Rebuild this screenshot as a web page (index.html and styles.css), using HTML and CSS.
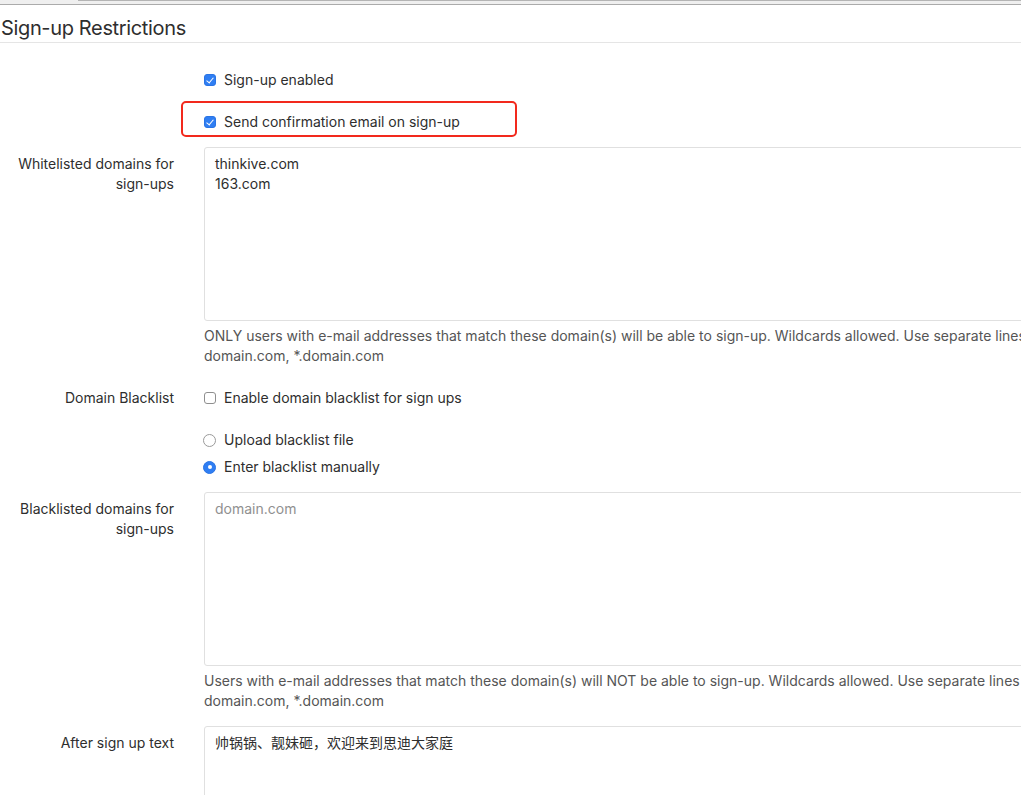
FILE: index.html
```html
<!DOCTYPE html>
<html>
<head>
<meta charset="utf-8">
<link rel="stylesheet" href="styles.css">
</head>
<body>
<div class="viewport">
  <div class="topbar"><div class="tab-line"></div></div>
  <div class="page">
    <h3 class="page-title">Sign-up Restrictions</h3>

    <div class="group check-group">
      <div class="label-col"></div>
      <div class="control-col">
        <label class="check"><span class="box checked"></span>Sign-up enabled</label>
      </div>
    </div>

    <div class="group check-group before-field">
      <div class="label-col"></div>
      <div class="control-col annotated">
        <label class="check"><span class="box checked"></span>Send confirmation email on sign-up</label>
        <span class="annotation"></span>
      </div>
    </div>

    <div class="group wide-gap">
      <label class="label-col field-label">Whitelisted domains for sign-ups</label>
      <div class="control-col">
        <div class="textarea">thinkive.com<br>163.com</div>
        <p class="help">ONLY users with e-mail addresses that match these domain(s) will be able to sign-up. Wildcards allowed. Use separate lines<br>domain.com, *.domain.com</p>
      </div>
    </div>

    <div class="group check-group">
      <label class="label-col">Domain Blacklist</label>
      <div class="control-col">
        <label class="check"><span class="box"></span>Enable domain blacklist for sign ups</label>
      </div>
    </div>

    <div class="group radio-group">
      <div class="label-col"></div>
      <div class="control-col radios">
        <label class="check"><span class="radio"></span>Upload blacklist file</label>
        <label class="check"><span class="radio selected"></span>Enter blacklist manually</label>
      </div>
    </div>

    <div class="group tight-gap">
      <label class="label-col field-label">Blacklisted domains for sign-ups</label>
      <div class="control-col">
        <div class="textarea"><span class="placeholder">domain.com</span></div>
        <p class="help">Users with e-mail addresses that match these domain(s) will NOT be able to sign-up. Wildcards allowed. Use separate lines<br>domain.com, *.domain.com</p>
      </div>
    </div>

    <div class="group">
      <label class="label-col field-label">After sign up text</label>
      <div class="control-col">
        <div class="textarea cjk">帅锅锅、靓妹砸，欢迎来到思迪大家庭</div>
      </div>
    </div>
  </div>
</div>
</body>
</html>
```

FILE: styles.css
```css
html, body {
  margin: 0;
  padding: 0;
  background: #fff;
}

body {
  font-family: Inter, "Noto Sans CJK SC", sans-serif;
  font-size: 14px;
  line-height: 20px;
  color: #2e2e2e;
}

.viewport {
  width: 1021px;
  height: 795px;
  overflow: hidden;
}

.topbar {
  height: 4px;
  background: #efefef;
  border-bottom: 1px solid #ababab;
}

.tab-line {
  margin-left: 78px;
  border-top: 1px solid #b4b4b4;
}

.page {
  width: 1021px;
}

.page-title {
  margin: 11px 0 27px 0;
  padding: 0 0 2px 1px;
  font-size: 20px;
  line-height: 24px;
  font-weight: normal;
  letter-spacing: -0.35px;
  color: #2e2e2e;
  border-bottom: 1px solid #e5e5e5;
}

.group {
  display: grid;
  grid-template-columns: 174px 1400px;
  column-gap: 30px;
  margin-bottom: 16px;
}

.check-group,
.wide-gap {
  margin-bottom: 22px;
}

.check-group.before-field,
.radio-group,
.tight-gap {
  margin-bottom: 15px;
}

.label-col {
  padding-left: 12px;
  text-align: right;
  color: #2e2e2e;
}

.field-label {
  padding-top: 7px;
}

.control-col {
  min-width: 0;
}

.annotated {
  position: relative;
}

.annotation {
  position: absolute;
  left: -23px;
  top: -11px;
  width: 336px;
  height: 36px;
  box-sizing: border-box;
  border: 2px solid #f2291d;
  border-radius: 5px;
}

.check {
  display: flex;
  align-items: center;
  height: 20px;
  line-height: 20px;
  white-space: nowrap;
}

.radios {
  display: flex;
  flex-direction: column;
  gap: 7px;
}

.box {
  width: 12px;
  height: 12px;
  box-sizing: border-box;
  border: 1px solid #8f8f8f;
  border-radius: 3px;
  background: #fff;
  margin: 0 8px 0 0;
  position: relative;
  flex: none;
}

.box.checked {
  background: #2f7ef3;
  border-color: #2a74e4;
}

.box.checked::after {
  content: "";
  position: absolute;
  left: 3px;
  top: 1px;
  width: 3px;
  height: 6px;
  border: solid #fff;
  border-width: 0 1.6px 1.6px 0;
  transform: rotate(40deg);
}

.radio {
  width: 13px;
  height: 13px;
  box-sizing: border-box;
  border: 1px solid #9a9a9a;
  border-radius: 50%;
  background: #fff;
  margin: 0 8px 0 -1px;
  position: relative;
  flex: none;
}

.radio.selected {
  background: #2f7ef3;
  border-color: #2a74e4;
}

.radio.selected::after {
  content: "";
  position: absolute;
  left: 3.5px;
  top: 3.5px;
  width: 4px;
  height: 4px;
  border-radius: 50%;
  background: #fff;
}

.textarea {
  height: 174px;
  box-sizing: border-box;
  border: 1px solid #e0e0e0;
  border-radius: 3px;
  padding: 6px 10px 5px;
  color: #2e2e2e;
  background: #fff;
}

.placeholder {
  color: #909090;
}

.cjk {
  font-family: Inter, "Noto Sans CJK SC", sans-serif;
}

.help {
  margin: 5px 0 0 0;
  color: #555;
  white-space: nowrap;
}
```
